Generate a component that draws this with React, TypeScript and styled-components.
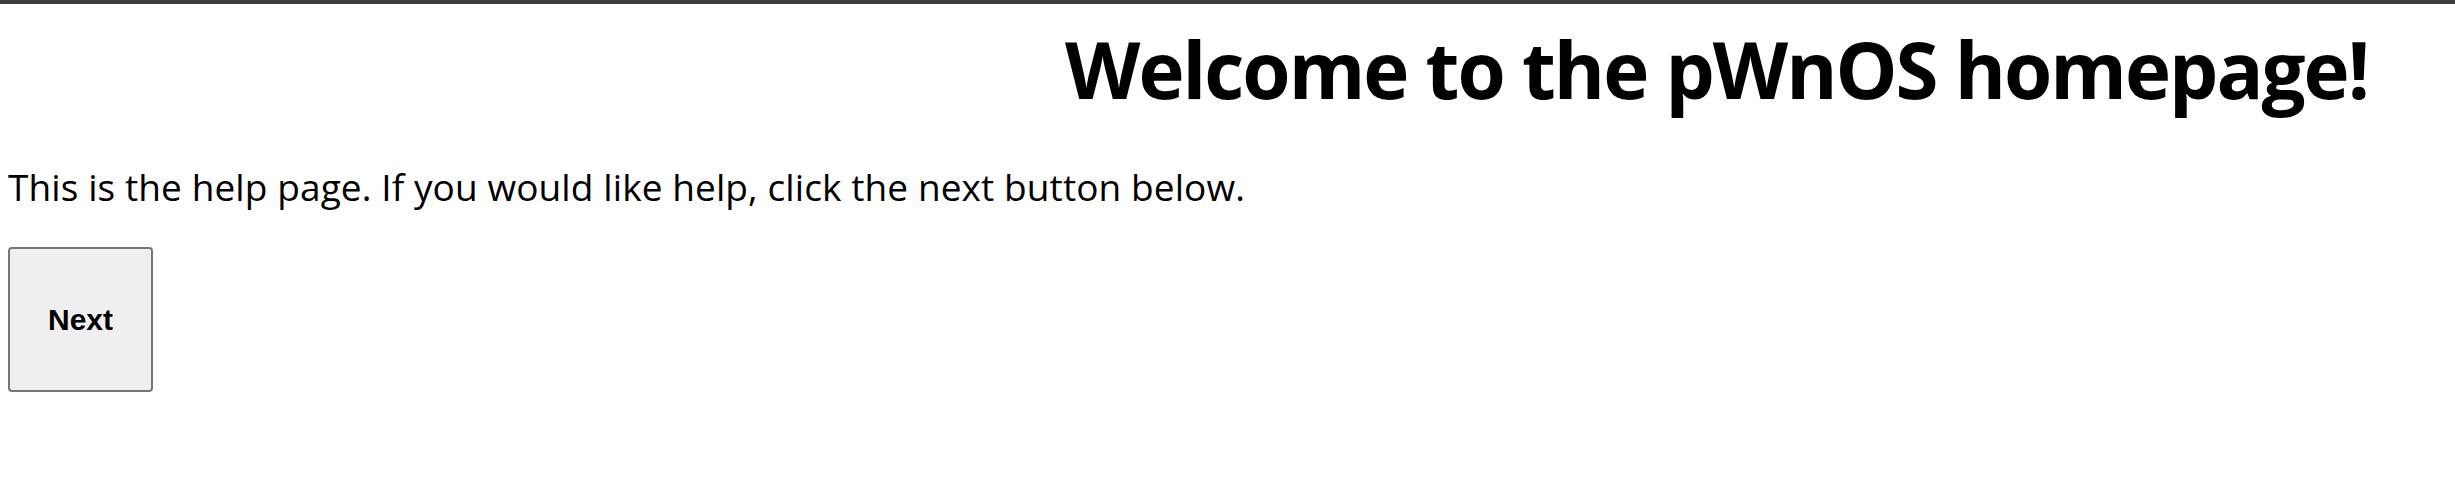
import React from "react";
import styled, { createGlobalStyle } from "styled-components";

const GlobalStyle = createGlobalStyle`
  html, body {
    margin: 0;
    padding: 0;
    background: #ffffff;
  }
  body {
    font-family: "Open Sans", "Noto Sans", sans-serif;
    color: #000000;
  }
`;

const TopBar = styled.div`
  height: 4px;
  background-color: #3c3c3c;
`;

const Page = styled.main`
  display: flex;
  flex-direction: column;
  padding: 0 8px;
`;

const HeadingRow = styled.header`
  display: flex;
  justify-content: flex-end;
  padding-right: 79px;
`;

const Heading = styled.h1`
  margin: 0;
  font-family: "Open Sans", "Noto Sans", sans-serif;
  font-weight: 700;
  font-size: 78px;
  line-height: 130px;
  letter-spacing: -2px;
`;

const HelpText = styled.p`
  margin: 23px 0 0;
  font-family: "Open Sans", "Noto Sans", sans-serif;
  font-size: 37px;
  line-height: 60px;
  letter-spacing: 0.1px;
`;

const NextButton = styled.button`
  margin-top: 30px;
  width: 145px;
  height: 145px;
  box-sizing: border-box;
  background-color: #efefef;
  border: 2px solid #767676;
  border-radius: 4px;
  font-family: "Liberation Sans", Arial, sans-serif;
  font-weight: 700;
  font-size: 30px;
  color: #000000;
  cursor: pointer;
`;

export default function App() {
  return (
    <>
      <GlobalStyle />
      <TopBar />
      <Page>
        <HeadingRow>
          <Heading>Welcome to the pWnOS homepage!</Heading>
        </HeadingRow>
        <HelpText>
          This is the help page. If you would like help, click the next button
          below.
        </HelpText>
        <div>
          <NextButton type="button">Next</NextButton>
        </div>
      </Page>
    </>
  );
}
